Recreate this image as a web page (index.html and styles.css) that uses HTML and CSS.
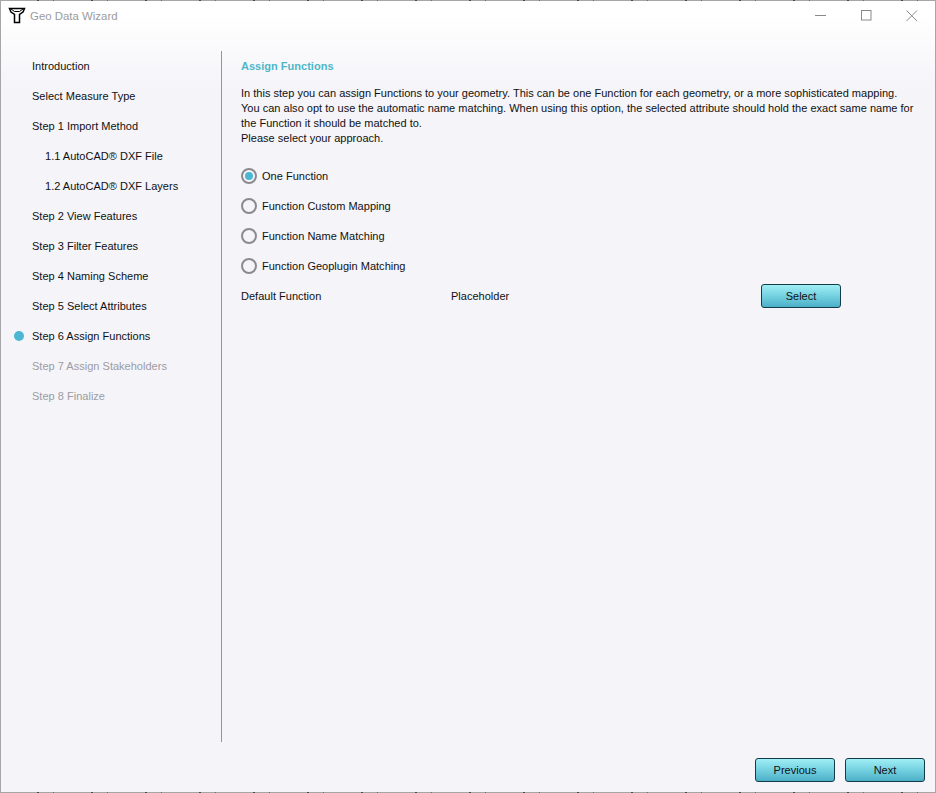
FILE: index.html
```html
<!DOCTYPE html>
<html lang="en">
<head>
<meta charset="utf-8">
<title>Geo Data Wizard</title>
<link rel="stylesheet" href="styles.css">
</head>
<body>
<div class="window">
  <header class="titlebar">
    <svg class="logo" width="18" height="18" viewBox="8 7 18 18" aria-hidden="true">
      <path d="M9.5 8.5H24.5L23 12L19.5 14.5V22.5H14.5V14.5L11 12Z" fill="#fff" stroke="#000" stroke-width="1.5"/>
      <path d="M11 9L14.5 11.5H19.5L23 9" fill="none" stroke="#000" stroke-width="1"/>
    </svg>
    <span class="title">Geo Data Wizard</span>
    <div class="controls">
      <svg width="12" height="12" viewBox="0 0 12 12" class="ctl ctl-gap"><path d="M0 5.5H11" stroke="#8a8a8a"/></svg>
      <svg width="12" height="12" viewBox="0 0 12 12" class="ctl ctl-gap"><rect x=".5" y=".5" width="9.5" height="9.5" fill="none" stroke="#8a8a8a"/></svg>
      <svg width="12" height="12" viewBox="0 0 12 12" class="ctl"><path d="M.5 .5L11 11M11 .5L.5 11" stroke="#8a8a8a"/></svg>
    </div>
  </header>
  <div class="body">
    <nav class="steps">
      <div class="step">Introduction</div>
      <div class="step">Select Measure Type</div>
      <div class="step">Step 1 Import Method</div>
      <div class="step sub">1.1 AutoCAD® DXF File</div>
      <div class="step sub">1.2 AutoCAD® DXF Layers</div>
      <div class="step">Step 2 View Features</div>
      <div class="step">Step 3 Filter Features</div>
      <div class="step">Step 4 Naming Scheme</div>
      <div class="step">Step 5 Select Attributes</div>
      <div class="step current">Step 6 Assign Functions</div>
      <div class="step off">Step 7 Assign Stakeholders</div>
      <div class="step off">Step 8 Finalize</div>
    </nav>
    <main class="content">
      <h1 class="heading">Assign Functions</h1>
      <p class="intro">In this step you can assign Functions to your geometry. This can be one Function for each geometry, or a more sophisticated mapping.<br>You can also opt to use the automatic name matching. When using this option, the selected attribute should hold the exact same name for<br>the Function it should be matched to.<br>Please select your approach.</p>
      <div class="options">
        <div class="option"><span class="radio on"></span>One Function</div>
        <div class="option"><span class="radio"></span>Function Custom Mapping</div>
        <div class="option"><span class="radio"></span>Function Name Matching</div>
        <div class="option"><span class="radio"></span>Function Geoplugin Matching</div>
      </div>
      <div class="default-row">
        <span class="label">Default Function</span>
        <span class="value">Placeholder</span>
        <button class="btn" type="button">Select</button>
      </div>
    </main>
  </div>
  <footer class="footer">
    <button class="btn" type="button">Previous</button>
    <button class="btn" type="button">Next</button>
  </footer>
</div>
</body>
</html>
```
FILE: styles.css
```css
* { box-sizing: border-box; }
html, body { margin: 0; height: 100%; }
body {
  background-color: #a6a6a6;
  background-image: repeating-linear-gradient(90deg, #a6a6a6 0 37px, #4a4a4a 37px 39px, #a6a6a6 39px 53px, #6a6a6a 53px 54px);
  overflow: hidden;
  font: 11px "Liberation Sans", Arial, sans-serif;
  letter-spacing: .015px;
  color: #111;
}
.window {
  height: 791px;
  margin: 1px;
  display: flex;
  flex-direction: column;
  background: linear-gradient(#fff 0, #fff 14px, #f4f4f9 90px);
}
.titlebar {
  height: 30px;
  flex: none;
  display: flex;
  align-items: center;
  padding-left: 7px;
}
.logo { flex: none; }
.title {
  margin-left: 4px;
  font-size: 11.4px;
  color: #9b9b9b;
}
.controls {
  margin-left: auto;
  display: flex;
  align-items: center;
  padding-right: 17px;
}
.ctl { display: block; }
.ctl-gap { margin-right: 33.5px; }
.body {
  flex: 1;
  display: flex;
  min-height: 0;
  padding-top: 20px;
}
.steps {
  width: 221px;
  height: 691px;
  flex: none;
  padding-left: 31px;
  border-right: 1px solid #43b4cc;
}
.step {
  height: 30px;
  line-height: 30px;
  position: relative;
  white-space: nowrap;
}
.step.sub { padding-left: 13px; }
.step.off { color: #9c9ca2; }
.step.current::before {
  content: "";
  position: absolute;
  left: -18px;
  top: 10px;
  width: 10px;
  height: 10px;
  border-radius: 50%;
  background: #4bb7d2;
}
.content {
  flex: 1;
  padding: 0 0 0 19px;
}
.heading {
  margin: 0;
  height: 30px;
  line-height: 30px;
  font-size: 11px;
  font-weight: bold;
  color: #4fb6c9;
}
.intro {
  margin: 0;
  line-height: 15px;
  height: 60px;
  white-space: nowrap;
  padding-top: 5px;
}
.options { margin-top: 20px; }
.option {
  height: 30px;
  display: flex;
  align-items: center;
}
.radio {
  width: 16px;
  height: 16px;
  border: 2px solid #8a8a90;
  border-radius: 50%;
  background: #f4f4f9;
  margin-right: 5px;
  flex: none;
  display: flex;
  align-items: center;
  justify-content: center;
}
.radio.on::after {
  content: "";
  width: 8px;
  height: 8px;
  border-radius: 50%;
  background: #4bb7d2;
}
.default-row {
  display: flex;
  align-items: center;
  height: 30px;
}
.label { width: 210px; }
.value { width: 310px; }
.btn {
  width: 80px;
  height: 24px;
  padding: 0;
  border: 1px solid #123c4a;
  border-radius: 3px;
  background: linear-gradient(#a0eef5 0, #78d4e2 45%, #4cafc8 100%);
  font: 11px "Liberation Sans", Arial, sans-serif;
  letter-spacing: .015px;
  color: #111;
}
.footer {
  flex: none;
  height: 50px;
  display: flex;
  justify-content: flex-end;
  gap: 10px;
  padding: 16px 10px 0 0;
}
```
